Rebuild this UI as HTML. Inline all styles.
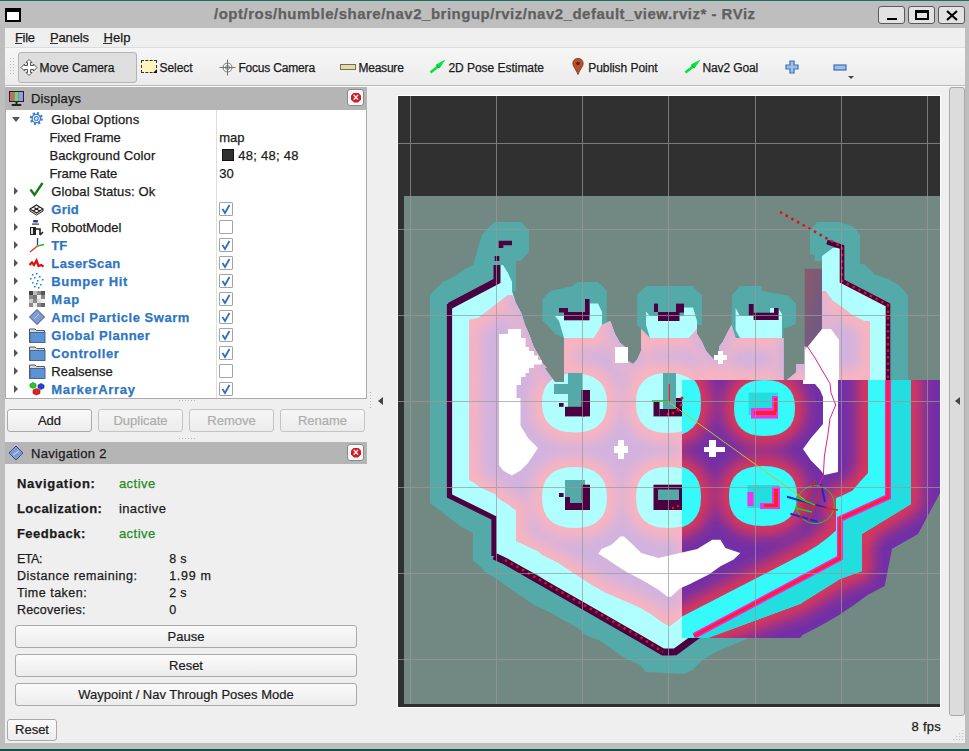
<!DOCTYPE html>
<html><head><meta charset="utf-8"><style>
*{margin:0;padding:0;box-sizing:border-box}
html,body{width:969px;height:751px;overflow:hidden;background:#bebebe;font-family:"Liberation Sans",sans-serif}
.a{position:absolute}
.t{position:absolute;white-space:nowrap;-webkit-text-stroke:0.25px currentColor}
.btn{position:absolute;border:1px solid #a9a9a9;border-radius:3px;background:linear-gradient(#fbfbfb,#ececec);color:#1b1b1b;font-size:13px;text-align:center;white-space:nowrap;-webkit-text-stroke:0.2px currentColor}
.btnd{color:#acacac;border-color:#c4c4c4;background:linear-gradient(#f6f6f6,#ececec)}
.cb{position:absolute;width:14px;height:14px;border:1px solid #a4a4a4;background:#fff;border-radius:1px}
.hdr{position:absolute;background:#b5b5b5}
.xb{position:absolute;width:17px;height:17px;border:1px solid #8a8a8a;border-radius:3px;background:#f8f8f8}
.xb:after{content:"\00d7";position:absolute;left:3px;top:2.5px;width:10px;height:10px;background:#d11a22;clip-path:polygon(30% 0,70% 0,100% 30%,100% 70%,70% 100%,30% 100%,0 70%,0 30%);color:#fff;font:bold 10px/10px "Liberation Sans";text-align:center}
.tb{position:absolute;border:1px solid #5a5a5a;border-radius:3px;background:#e2e2e2}
</style></head><body>
<!-- window frame -->
<div class="a" style="left:0;top:0;width:969px;height:1px;background:#1c7060"></div>
<div class="a" style="left:0;top:749px;width:969px;height:2px;background:#0f5248"></div>
<!-- window icon -->
<div class="a" style="left:5px;top:8px;width:16px;height:14px;background:#fff;border:2px solid #000;border-top-width:4px"></div>
<!-- title buttons -->
<div class="tb" style="left:878px;top:6px;width:27px;height:18px"><div class="a" style="left:8px;top:11px;width:10px;height:2px;background:#000"></div></div>
<div class="tb" style="left:908px;top:6px;width:27px;height:18px"><div class="a" style="left:6px;top:3px;width:14px;height:10px;border:2px solid #000;border-top-width:3px"></div></div>
<div class="tb" style="left:938px;top:6px;width:27px;height:18px"><svg class="a" style="left:7px;top:3px" width="12" height="11"><path d="M1 1L11 10M11 1L1 10" stroke="#000" stroke-width="2.2"/></svg></div>
<!-- content -->
<div class="a" style="left:5px;top:28px;width:960px;height:715px;background:#efefef"></div>
<div class="a" style="left:5px;top:47px;width:960px;height:1px;background:#dcdcdc"></div>
<div class="a" style="left:5px;top:48px;width:960px;height:37px;background:linear-gradient(#f6f6f6,#ececec)"></div>
<div class="a" style="left:5px;top:85px;width:960px;height:1px;background:#b9b9b9"></div>
<div class="a" style="left:5px;top:86px;width:960px;height:1px;background:#fafafa"></div>
<!-- menu underlines -->
<div class="a" style="left:15px;top:43px;width:7px;height:1px;background:#333"></div>
<div class="a" style="left:50px;top:43px;width:8px;height:1px;background:#333"></div>
<div class="a" style="left:103px;top:43px;width:9px;height:1px;background:#333"></div>
<!-- toolbar grip -->
<svg class="a" style="left:10px;top:58px" width="6" height="18"><g fill="#b8b8b8"><rect x="0" y="0" width="1" height="1"/><rect x="3" y="0" width="1" height="1"/><rect x="0" y="3" width="1" height="1"/><rect x="3" y="3" width="1" height="1"/><rect x="0" y="6" width="1" height="1"/><rect x="3" y="6" width="1" height="1"/><rect x="0" y="9" width="1" height="1"/><rect x="3" y="9" width="1" height="1"/><rect x="0" y="12" width="1" height="1"/><rect x="3" y="12" width="1" height="1"/><rect x="0" y="15" width="1" height="1"/><rect x="3" y="15" width="1" height="1"/></g></svg>
<!-- move camera button -->
<div class="a" style="left:18px;top:52px;width:119px;height:31px;border:1px solid #b4b4b4;border-radius:3px;background:#dedede"></div>
<!-- toolbar icons -->
<svg class="a" style="left:20px;top:59px" width="18" height="17" viewBox="0 0 18 17"><g fill="#fff" stroke="#555" stroke-width="1"><path d="M9 0.5L12 3.5H10.5V6.5H13.5V5L17 8.5L13.5 12V10.5H10.5V13.5H12L9 16.5L6 13.5H7.5V10.5H4.5V12L1 8.5L4.5 5V6.5H7.5V3.5H6Z"/></g></svg>
<div class="a" style="left:141px;top:60px;width:16px;height:13px;background:#fbf6bc;border:1px dashed #333"></div>
<div class="a" style="left:153px;top:69px;width:0;height:0;border-left:4px solid transparent;border-bottom:4px solid #111"></div>
<svg class="a" style="left:219px;top:59px" width="17" height="17" viewBox="0 0 17 17"><g fill="none" stroke="#777" stroke-width="1"><circle cx="8.5" cy="8.5" r="4.5" fill="#f4f4f4"/><path d="M8.5 0.5V16.5M0.5 8.5H16.5"/><circle cx="8.5" cy="8.5" r="2"/></g></svg>
<div class="a" style="left:340px;top:64px;width:16px;height:6px;background:#e8dc9a;border:1px solid #6d6d6d"></div>
<svg class="a" style="left:429px;top:59px" width="17" height="15" viewBox="0 0 17 15"><path d="M1.5 13.5L9 7.5" stroke="#00e63a" stroke-width="2.6"/><path d="M16.5 0.5L7 5.5L10.5 9.5Z" fill="#00e63a"/><path d="M7.5 6L10 8.8" stroke="#0a8a2a" stroke-width="1"/></svg>
<svg class="a" style="left:572px;top:58px" width="12" height="17" viewBox="0 0 12 17"><path d="M6 16.5C4 11 0.8 8.5 0.8 5.5A5.2 5.2 0 0 1 11.2 5.5C11.2 8.5 8 11 6 16.5Z" fill="#b8502a" stroke="#7a3418" stroke-width="0.8"/><circle cx="6" cy="5.5" r="1.8" fill="#5a2410"/></svg>
<svg class="a" style="left:684px;top:59px" width="17" height="15" viewBox="0 0 17 15"><path d="M1.5 13.5L9 7.5" stroke="#00e63a" stroke-width="2.6"/><path d="M16.5 0.5L7 5.5L10.5 9.5Z" fill="#00e63a"/><path d="M7.5 6L10 8.8" stroke="#0a8a2a" stroke-width="1"/></svg>
<svg class="a" style="left:785px;top:60px" width="14" height="14" viewBox="0 0 14 14"><path d="M5 1H9V5H13V9H9V13H5V9H1V5H5Z" fill="#9cc0ea" stroke="#3d6fb6" stroke-width="1.2"/></svg>
<svg class="a" style="left:833px;top:64px" width="14" height="7" viewBox="0 0 14 7"><rect x="1" y="1" width="12" height="5" fill="#9cc0ea" stroke="#3d6fb6" stroke-width="1.2"/></svg>
<div class="a" style="left:848px;top:76px;width:0;height:0;border-left:3px solid transparent;border-right:3px solid transparent;border-top:3px solid #444"></div>

<!-- Displays panel -->
<div class="hdr" style="left:5px;top:87px;width:362px;height:23px"></div>
<svg class="a" style="left:8px;top:90px" width="17" height="17" viewBox="0 0 17 17"><rect x="1" y="1" width="15" height="11" fill="#222"/><rect x="2" y="2" width="4.3" height="9" fill="#c86a6a"/><rect x="6.3" y="2" width="4.4" height="9" fill="#7ccf7c"/><rect x="10.7" y="2" width="4.3" height="9" fill="#9a9ae6"/><rect x="7.5" y="12" width="2" height="2" fill="#222"/><rect x="3.5" y="14" width="10" height="2" rx="1" fill="#222"/></svg>
<div class="xb" style="left:347px;top:89px"></div>
<div class="a" style="left:5px;top:110px;width:362px;height:289px;background:#fff;border:1px solid #ababab;border-top:none"></div>
<div class="a" style="left:216px;top:110px;width:1px;height:288px;background:#dedede"></div>
<!-- tree arrows -->
<div class="a" style="left:12px;top:117px;width:0;height:0;border-left:4px solid transparent;border-right:4px solid transparent;border-top:5px solid #555"></div>
<div class="a" style="left:14px;top:187px;width:0;height:0;border-top:4px solid transparent;border-bottom:4px solid transparent;border-left:4.5px solid #555"></div><div class="a" style="left:14px;top:205px;width:0;height:0;border-top:4px solid transparent;border-bottom:4px solid transparent;border-left:4.5px solid #555"></div><div class="a" style="left:14px;top:223px;width:0;height:0;border-top:4px solid transparent;border-bottom:4px solid transparent;border-left:4.5px solid #555"></div><div class="a" style="left:14px;top:241px;width:0;height:0;border-top:4px solid transparent;border-bottom:4px solid transparent;border-left:4.5px solid #555"></div><div class="a" style="left:14px;top:259px;width:0;height:0;border-top:4px solid transparent;border-bottom:4px solid transparent;border-left:4.5px solid #555"></div><div class="a" style="left:14px;top:277px;width:0;height:0;border-top:4px solid transparent;border-bottom:4px solid transparent;border-left:4.5px solid #555"></div><div class="a" style="left:14px;top:295px;width:0;height:0;border-top:4px solid transparent;border-bottom:4px solid transparent;border-left:4.5px solid #555"></div><div class="a" style="left:14px;top:313px;width:0;height:0;border-top:4px solid transparent;border-bottom:4px solid transparent;border-left:4.5px solid #555"></div><div class="a" style="left:14px;top:331px;width:0;height:0;border-top:4px solid transparent;border-bottom:4px solid transparent;border-left:4.5px solid #555"></div><div class="a" style="left:14px;top:349px;width:0;height:0;border-top:4px solid transparent;border-bottom:4px solid transparent;border-left:4.5px solid #555"></div><div class="a" style="left:14px;top:367px;width:0;height:0;border-top:4px solid transparent;border-bottom:4px solid transparent;border-left:4.5px solid #555"></div><div class="a" style="left:14px;top:385px;width:0;height:0;border-top:4px solid transparent;border-bottom:4px solid transparent;border-left:4.5px solid #555"></div>
<!-- checkboxes -->
<div class="cb" style="left:219px;top:202px"></div>
<div class="cb" style="left:219px;top:220px"></div>
<div class="cb" style="left:219px;top:238px"></div>
<div class="cb" style="left:219px;top:256px"></div>
<div class="cb" style="left:219px;top:274px"></div>
<div class="cb" style="left:219px;top:292px"></div>
<div class="cb" style="left:219px;top:310px"></div>
<div class="cb" style="left:219px;top:328px"></div>
<div class="cb" style="left:219px;top:346px"></div>
<div class="cb" style="left:219px;top:364px"></div>
<div class="cb" style="left:219px;top:382px"></div>
<svg class="a" style="left:219px;top:202px" width="14" height="200" viewBox="0 0 14 200"><g fill="none" stroke="#2f6fc0" stroke-width="1.8"><path id="ck" d="M3.5 7L6 11L10.5 3"/><use href="#ck" y="36"/><use href="#ck" y="54"/><use href="#ck" y="72"/><use href="#ck" y="90"/><use href="#ck" y="108"/><use href="#ck" y="126"/><use href="#ck" y="144"/><use href="#ck" y="180"/></g></svg>
<!-- color swatch -->
<div class="a" style="left:222px;top:149px;width:12px;height:12px;background:#303030;border:1px solid #111"></div>
<!-- tree icons -->
<svg class="a" style="left:29px;top:110px" width="20" height="290" viewBox="0 0 20 290">
 <g transform="translate(7.3,8.5)"><circle r="5.2" fill="none" stroke="#3c7fd0" stroke-width="2.6" stroke-dasharray="2 2.08"/><circle r="4.2" fill="none" stroke="#3c7fd0" stroke-width="1.3"/><circle r="1.9" fill="none" stroke="#3c7fd0" stroke-width="1.2"/></g>
 <path d="M1.5 79.5L5.5 85L13.5 73" fill="none" stroke="#1a7a1a" stroke-width="2.4"/>
 <g transform="translate(0,93)"><path d="M1 6L7.5 2L14 6L7.5 10Z M4.2 4L10.8 8M10.8 4L4.2 8" fill="none" stroke="#222" stroke-width="1.1"/><path d="M1 6.5V8L7.5 12L14 8V6.5" fill="none" stroke="#222" stroke-width="1"/></g>
 <g transform="translate(0,110)"><rect x="4" y="0" width="5" height="2.5" rx="1" fill="#2a3a9a"/><rect x="3" y="3.5" width="7" height="1.2" fill="#333"/><rect x="1" y="7" width="6" height="8" fill="#222"/><rect x="2" y="8" width="2" height="6" fill="#ddd"/><path d="M7 9H11V15M11 15L14 12" fill="none" stroke="#222" stroke-width="1.6"/></g>
 <g transform="translate(0,127)"><path d="M8.5 9V1" stroke="#2233dd" stroke-width="1.3"/><path d="M8.5 9L15 7.5" stroke="#22bb22" stroke-width="1.3"/><path d="M8.5 9L1 15" stroke="#ee2222" stroke-width="1.3"/><circle cx="8.5" cy="9" r="1" fill="#dd8800"/></g>
 <g transform="translate(0,148)"><path d="M0.5 7L3 4.5L5 7L7.5 2.5L9.5 8L12 7L14.5 8.5" fill="none" stroke="#e01010" stroke-width="2.3"/></g>
 <g transform="translate(0,163)" fill="#1a7ae0"><rect x="3" y="1" width="1.5" height="1.5"/><rect x="7" y="0" width="1.5" height="1.5"/><rect x="10" y="3" width="1.5" height="1.5"/><rect x="1" y="5" width="1.5" height="1.5"/><rect x="5" y="4" width="1.5" height="1.5"/><rect x="8" y="7" width="1.5" height="1.5"/><rect x="13" y="6" width="1.5" height="1.5"/><rect x="3" y="9" width="1.5" height="1.5"/><rect x="7" y="10" width="1.5" height="1.5"/><rect x="11" y="11" width="1.5" height="1.5"/><rect x="5" y="13" width="1.5" height="1.5"/><rect x="9" y="14" width="1.5" height="1.5"/></g>
 <g transform="translate(0,181)"><rect x="0" y="0" width="16" height="16" fill="#8a8a8a"/><rect x="0" y="0" width="4" height="4" fill="#444"/><rect x="4" y="0" width="4" height="4" fill="#bbb"/><rect x="12" y="0" width="4" height="4" fill="#555"/><rect x="4" y="4" width="4" height="4" fill="#777"/><rect x="8" y="4" width="4" height="4" fill="#eee"/><rect x="0" y="8" width="4" height="4" fill="#ccc"/><rect x="8" y="8" width="4" height="4" fill="#ddd"/><rect x="12" y="8" width="4" height="4" fill="#f4f4f4"/><rect x="4" y="12" width="4" height="4" fill="#eee"/><rect x="12" y="12" width="4" height="4" fill="#666"/></g>
 <g transform="translate(0,199)"><path d="M8 0.5L15.5 8L8 15.5L0.5 8Z" fill="#7f9ad0" stroke="#3a4f88" stroke-width="1"/><path d="M5 10L10 5" stroke="#c8d8f8" stroke-width="0.8"/></g>
 <g id="fold" transform="translate(0,218)"><path d="M0.5 1H6L7.5 2.5H15.5V14.5H0.5Z" fill="#d8d8d8" stroke="#555" stroke-width="1"/><rect x="1" y="4.5" width="15" height="10" fill="#5d93d2" stroke="#44679a" stroke-width="1"/></g>
 <use href="#fold" y="18"/><use href="#fold" y="36"/>
 <g transform="translate(0,271)"><path d="M1 3L4 1.5L7 3V6L4 7.5L1 6Z" fill="#22cc22" stroke="#118811" stroke-width="0.6"/><path d="M9 4L12 2.5L15 4V7L12 8.5L9 7Z" fill="#2244dd" stroke="#112288" stroke-width="0.6"/><path d="M4 9L7.5 7.5L11 9V12.5L7.5 14L4 12.5Z" fill="#dd2222" stroke="#881111" stroke-width="0.6"/></g>
</svg>
<!-- splitter grip -->
<svg class="a" style="left:179px;top:399px" width="18" height="42"><g fill="#b8b8b8"><rect x="0" y="1" width="1" height="1"/><rect x="3" y="1" width="1" height="1"/><rect x="6" y="1" width="1" height="1"/><rect x="9" y="1" width="1" height="1"/><rect x="12" y="1" width="1" height="1"/><rect x="15" y="1" width="1" height="1"/><rect x="0" y="39" width="1" height="1"/><rect x="3" y="39" width="1" height="1"/><rect x="6" y="39" width="1" height="1"/><rect x="9" y="39" width="1" height="1"/><rect x="12" y="39" width="1" height="1"/><rect x="15" y="39" width="1" height="1"/></g></svg>
<!-- buttons -->
<div class="btn" style="left:7px;top:409px;width:85px;height:23px;line-height:21px">Add</div>
<div class="btn btnd" style="left:98px;top:409px;width:85px;height:23px;line-height:21px">Duplicate</div>
<div class="btn btnd" style="left:189px;top:409px;width:85px;height:23px;line-height:21px">Remove</div>
<div class="btn btnd" style="left:280px;top:409px;width:85px;height:23px;line-height:21px">Rename</div>
<!-- Navigation 2 -->
<div class="hdr" style="left:5px;top:442px;width:362px;height:22px"></div>
<svg class="a" style="left:8px;top:445px" width="16" height="16" viewBox="0 0 16 16"><path d="M8 1L15 8L8 15L1 8Z" fill="#7f9ad0" stroke="#3a4f88" stroke-width="1"/><path d="M5 10L11 6" stroke="#cfe0ff" stroke-width="1"/></svg>
<div class="xb" style="left:347px;top:444px"></div>
<div class="btn" style="left:15px;top:625px;width:342px;height:23px;line-height:21px">Pause</div>
<div class="btn" style="left:15px;top:654px;width:342px;height:23px;line-height:21px">Reset</div>
<div class="btn" style="left:15px;top:683px;width:342px;height:23px;line-height:21px">Waypoint / Nav Through Poses Mode</div>
<div class="btn" style="left:7px;top:719px;width:50px;height:22px;line-height:20px">Reset</div>
<!-- left/right splitters -->
<svg class="a" style="left:370px;top:392px" width="3" height="18"><g fill="#b8b8b8"><rect x="0" y="0" width="1" height="1"/><rect x="0" y="3" width="1" height="1"/><rect x="0" y="6" width="1" height="1"/><rect x="0" y="9" width="1" height="1"/><rect x="0" y="12" width="1" height="1"/><rect x="0" y="15" width="1" height="1"/></g></svg>
<div class="a" style="left:378px;top:397px;width:0;height:0;border-top:4.5px solid transparent;border-bottom:4.5px solid transparent;border-right:5px solid #444"></div>
<div class="a" style="left:949px;top:87px;width:16px;height:629px;border:1px solid #a8a8a8;border-radius:3px;background:#dcdcdc"></div>
<div class="a" style="left:955px;top:397px;width:0;height:0;border-top:4.5px solid transparent;border-bottom:4.5px solid transparent;border-right:5px solid #444"></div>
<svg class="a" style="left:953px;top:729px" width="12" height="12"><g fill="#c4c4c4"><rect x="9" y="1" width="1.2" height="1.2"/><rect x="6" y="4" width="1.2" height="1.2"/><rect x="9" y="4" width="1.2" height="1.2"/><rect x="3" y="7" width="1.2" height="1.2"/><rect x="6" y="7" width="1.2" height="1.2"/><rect x="9" y="7" width="1.2" height="1.2"/><rect x="0" y="10" width="1.2" height="1.2"/><rect x="3" y="10" width="1.2" height="1.2"/><rect x="6" y="10" width="1.2" height="1.2"/><rect x="9" y="10" width="1.2" height="1.2"/></g></svg>
<!-- viewport -->
<div class="a" style="left:397px;top:95px;width:544px;height:613px;background:#fff"></div>
<svg class="a" style="left:398px;top:96px" width="542" height="611" viewBox="398 96 542 611">
<defs>
<clipPath id="vp"><rect x="398" y="96" width="542" height="611"/></clipPath>
<clipPath id="loc"><polygon points="682,380 940,380 940,493 918,534 892,549 884.7,586 867.5,595 852.5,606 837.5,616 820,626 802.5,635 800,638 682,638"/></clipPath>
<clipPath id="pkc"><polygon points="469,320 469.3,480 473.3,482 478.6,486 486,490 495.3,494 499.3,499 508,504 512.6,508 516,510 516,541 520.6,543 529,547 538,551 542.5,555 558,562.5 573,572.5 590.5,584 605.5,592.5 623,600 640,607.5 652.5,615 662.5,622.5 670,626 681,617.5 690,612 690,380 870,380 870,321 864,321 852,315 844.7,309 832.7,300.7 825.5,291 818,291 818,346 804.6,346 804.6,364 796,364 796,372.5 787,380 783.5,380 783.5,338 782,338 735.6,338 731.5,325 726.7,334 722.7,342 719,346.7 719,359.5 714,359.5 710,355.5 706,351 702,342 697,334 697,329 689,338 650,338 641,329 641,351 637,360 633,364 628,361 624.7,346.7 620,342.7 615,334 610.3,321 602,325 594,338 564,338 564,382 555,382 551,374 546.3,367.5 542.4,362.7 538.4,354.7 533.6,346.7 529,334 525,325 521,312.4 516,303.6 512,295 508,295 478.5,318"/></clipPath>
<filter id="bl" x="-20%" y="-20%" width="140%" height="140%"><feGaussianBlur stdDeviation="6"/></filter>
<filter id="bl2" x="-20%" y="-20%" width="140%" height="140%"><feGaussianBlur stdDeviation="8"/></filter>
<linearGradient id="strip" x1="0" y1="0" x2="1" y2="1"><stop offset="0" stop-color="#8a5a6a"/><stop offset="1" stop-color="#6a5a8a"/></linearGradient>
</defs><g clip-path="url(#vp)">
<rect x="398" y="96" width="542" height="611" fill="#303030"/>
<rect x="404" y="196" width="536" height="508" fill="#718883"/>
<polygon fill="#53aaa9" points="430,503 430,295 434,290.5 439,286 443,282 451.5,278 459.5,273 465,269 473,265 478,248 482,235 486,230 490,226 495,222 521,222 525,226 529,230 529,252 525,256 521,261 516,261 516,291 512,291 516,303.6 521,312.4 525,325 529,334 533.6,346.7 538.4,354.7 542.4,362.7 546.3,367.5 551,374 555,382 564,382 564,338 555,334 551,329 546,324 542.4,321 542.4,299.6 546.3,294.8 551,290.8 572.7,286 577.5,282 597.5,282 602.3,286 606.8,290.8 606.8,321 610.3,321 615,334 620,342.7 624.7,346.7 628,361 633,364 637,360 641,351 641,329 637.2,325 637.2,294.8 641,290.8 646,286 693,286 697,290.8 702,294.8 702,325 697,325 697,334 702,342 706,351 710,355.5 714,359.5 719,359.5 719,346.7 722.7,342 726.7,334 731.5,325 732,294.8 736,290.8 740,286 762,286 762,291 788,295.4 796,304 796,324 783.5,329 783.5,380 787,380 796,372.5 796,364 804.6,364 804.6,268.7 822,268.7 822,261 814.7,261 814.7,255 810,254 810,231 814,226 817,222 838.7,222 852,226 856.7,230 860,234.8 860,263.5 865,264.7 870,269.5 874.7,274.3 888,279 898.6,285 904.6,291 908,296 908,540 750,637.5 732.5,645 715,652.5 702.5,660 692.5,670 684,674 646,672 640,665 624,657.5 613,650 600.5,641 585.5,635 577,627.5 563,620 550.5,612.5 534,605 525.5,599 512,590 498,580 485.5,572 477.5,564 473,561 473,533 460,526"/>
<polygon fill="#b0fefe" points="449,320 449,303 497,280 497,265 503,265 508,273 512,282 512,291 540,380 818,380 818,291 822,281.5 822,256 832.7,248 840,248 841,281 888,305 888,497 840,519 840,558 705,630 675,656 657.5,647.5 640,637.5 623,627.5 608,617.5 588,607.5 568,595 548,582.5 538,575 518,565 505,560 494,556 494,518 449,496"/>
<polygon fill="#b0fefe" points="555,316 559,321 564,338 594,338 598,334 602,325 602,312 598,303.6 590,303.6 590,316"/>
<polygon fill="#b0fefe" points="646,311.5 646,325 650,338 689,338 693,334 697,329 697,321 693,307.6 684,307.6 684,316 650,316"/>
<polygon fill="#b0fefe" points="735.6,308 735.6,330 740,338 782,338 782,314 778,308 770,308 770,316 740,316"/>
<polygon fill="#d2b3df" points="469,320 469.3,480 473.3,482 478.6,486 486,490 495.3,494 499.3,499 508,504 512.6,508 516,510 516,541 520.6,543 529,547 538,551 542.5,555 558,562.5 573,572.5 590.5,584 605.5,592.5 623,600 640,607.5 652.5,615 662.5,622.5 670,626 681,617.5 690,612 690,380 870,380 870,321 864,321 852,315 844.7,309 832.7,300.7 825.5,291 818,291 818,346 804.6,346 804.6,364 796,364 796,372.5 787,380 783.5,380 783.5,338 782,338 735.6,338 731.5,325 726.7,334 722.7,342 719,346.7 719,359.5 714,359.5 710,355.5 706,351 702,342 697,334 697,329 689,338 650,338 641,329 641,351 637,360 633,364 628,361 624.7,346.7 620,342.7 615,334 610.3,321 602,325 594,338 564,338 564,382 555,382 551,374 546.3,367.5 542.4,362.7 538.4,354.7 533.6,346.7 529,334 525,325 521,312.4 516,303.6 512,295 508,295 478.5,318"/>
<g clip-path="url(#pkc)"><g filter="url(#bl)" fill="none" stroke="#f8b4c0" stroke-width="22">
<polygon points="469,320 469.3,480 473.3,482 478.6,486 486,490 495.3,494 499.3,499 508,504 512.6,508 516,510 516,541 520.6,543 529,547 538,551 542.5,555 558,562.5 573,572.5 590.5,584 605.5,592.5 623,600 640,607.5 652.5,615 662.5,622.5 670,626 681,617.5 690,612 690,380 870,380 870,321 864,321 852,315 844.7,309 832.7,300.7 825.5,291 818,291 818,346 804.6,346 804.6,364 796,364 796,372.5 787,380 783.5,380 783.5,338 782,338 735.6,338 731.5,325 726.7,334 722.7,342 719,346.7 719,359.5 714,359.5 710,355.5 706,351 702,342 697,334 697,329 689,338 650,338 641,329 641,351 637,360 633,364 628,361 624.7,346.7 620,342.7 615,334 610.3,321 602,325 594,338 564,338 564,382 555,382 551,374 546.3,367.5 542.4,362.7 538.4,354.7 533.6,346.7 529,334 525,325 521,312.4 516,303.6 512,295 508,295 478.5,318"/>
<polygon points="607.0,403.0 606.5,410.6 604.9,416.2 602.4,421.1 598.8,425.1 594.4,428.3 589.1,430.6 582.8,432.0 574.5,432.5 566.2,432.0 559.9,430.6 554.6,428.3 550.2,425.1 546.6,421.1 544.1,416.2 542.5,410.6 542.0,403.0 542.5,395.4 544.1,389.8 546.6,384.9 550.2,380.9 554.6,377.7 559.9,375.4 566.2,374.0 574.5,373.5 582.8,374.0 589.1,375.4 594.4,377.7 598.8,380.9 602.4,384.9 604.9,389.8 606.5,395.4"/>
<polygon points="700.0,403.0 699.5,410.7 698.0,416.5 695.4,421.4 692.0,425.5 687.6,428.7 682.4,431.1 676.2,432.5 668.0,433.0 659.8,432.5 653.6,431.1 648.4,428.7 644.0,425.5 640.6,421.4 638.0,416.5 636.5,410.7 636.0,403.0 636.5,395.3 638.0,389.5 640.6,384.6 644.0,380.5 648.4,377.3 653.6,374.9 659.8,373.5 668.0,373.0 676.2,373.5 682.4,374.9 687.6,377.3 692.0,380.5 695.4,384.6 698.0,389.5 699.5,395.3"/>
<polygon points="607.0,497.5 606.5,505.3 604.9,511.2 602.4,516.2 598.8,520.3 594.4,523.7 589.1,526.1 582.8,527.5 574.5,528.0 566.2,527.5 559.9,526.1 554.6,523.7 550.2,520.3 546.6,516.2 544.1,511.2 542.5,505.3 542.0,497.5 542.5,489.7 544.1,483.8 546.6,478.8 550.2,474.7 554.6,471.3 559.9,468.9 566.2,467.5 574.5,467.0 582.8,467.5 589.1,468.9 594.4,471.3 598.8,474.7 602.4,478.8 604.9,483.8 606.5,489.7"/>
<polygon points="700.0,497.5 699.5,505.3 698.0,511.2 695.4,516.2 692.0,520.3 687.6,523.7 682.4,526.1 676.2,527.5 668.0,528.0 659.8,527.5 653.6,526.1 648.4,523.7 644.0,520.3 640.6,516.2 638.0,511.2 636.5,505.3 636.0,497.5 636.5,489.7 638.0,483.8 640.6,478.8 644.0,474.7 648.4,471.3 653.6,468.9 659.8,467.5 668.0,467.0 676.2,467.5 682.4,468.9 687.6,471.3 692.0,474.7 695.4,478.8 698.0,483.8 699.5,489.7"/>
</g>
<g filter="url(#bl)" fill="none" stroke="#d2b3df" stroke-width="14">
<polyline points="512,291 516,303.6 521,312.4 525,325 529,334 533.6,346.7 538.4,354.7 542.4,362.7 546.3,367.5 551,374 555,382 564,382"/>
<polyline points="610.3,321 615,334 620,342.7 624.7,346.7 628,361 633,364 637,360 641,351"/>
<polyline points="697,329 697,334 702,342 706,351 710,355.5 714,359.5 719,359.5 719,346.7 722.7,342 726.7,334 731.5,325"/>
<polyline points="783.5,380 783.5,338"/><polyline points="796,372.5 796,364 804.6,364 818,346 818,291"/>
</g></g>
<rect x="804.6" y="268.7" width="17.4" height="78" fill="url(#strip)"/>
<polygon fill="#fff" points="499,334 508,334 508,329 521,329 521,338 525.5,338 525.5,347 529,347 529,351 534,351 534,355.5 538,355.5 538,360 541.7,360 541.7,364.5 534,364.5 534,368 529,368 529,373 525.5,373 525.5,377 521,377 521,385 516.5,385 516.5,398 520.5,398 520.5,425.5 528,438 538,448 528,463 520.5,470.5 511.75,475.5 503,470.5 499,465"/>
<polygon fill="#fff" points="615,347 628,347 628,363 615,363"/>
<polygon fill="#fff" points="718,351 723,351 723,355 727,355 727,360 723,360 723,364 718,364 718,360 714,360 714,355 718,355"/>
<polygon fill="#fff" points="618,440 624,440 624,446 628,446 628,453 624,453 624,459 618,459 618,453 614,453 614,446 618,446"/>
<polygon fill="#fff" points="822,329 831,329 839,340 839,482 820,470 802,450 812,432 805,390 805,350"/>
<polygon fill="#fff" points="598.3,553.8 601.6,548.9 611.5,544.7 620.5,536.5 623.9,536.5 633,544.7 641.2,553 658.5,558 680,553 697.3,548.9 712.2,539.8 720.4,539.8 725.4,548 740.3,553 733.7,559.6 720.4,566.2 708.9,574.4 689,584.4 680,588.5 671,596.7 667.6,596.7 657.7,589.3 641.2,579.4 628,572.8 614.8,564.5 606.5,558.8"/>
<polygon fill="#b0fefe" points="607.0,403.0 606.5,410.6 604.9,416.2 602.4,421.1 598.8,425.1 594.4,428.3 589.1,430.6 582.8,432.0 574.5,432.5 566.2,432.0 559.9,430.6 554.6,428.3 550.2,425.1 546.6,421.1 544.1,416.2 542.5,410.6 542.0,403.0 542.5,395.4 544.1,389.8 546.6,384.9 550.2,380.9 554.6,377.7 559.9,375.4 566.2,374.0 574.5,373.5 582.8,374.0 589.1,375.4 594.4,377.7 598.8,380.9 602.4,384.9 604.9,389.8 606.5,395.4"/>
<polygon fill="#b0fefe" points="700.0,403.0 699.5,410.7 698.0,416.5 695.4,421.4 692.0,425.5 687.6,428.7 682.4,431.1 676.2,432.5 668.0,433.0 659.8,432.5 653.6,431.1 648.4,428.7 644.0,425.5 640.6,421.4 638.0,416.5 636.5,410.7 636.0,403.0 636.5,395.3 638.0,389.5 640.6,384.6 644.0,380.5 648.4,377.3 653.6,374.9 659.8,373.5 668.0,373.0 676.2,373.5 682.4,374.9 687.6,377.3 692.0,380.5 695.4,384.6 698.0,389.5 699.5,395.3"/>
<polygon fill="#b0fefe" points="607.0,497.5 606.5,505.3 604.9,511.2 602.4,516.2 598.8,520.3 594.4,523.7 589.1,526.1 582.8,527.5 574.5,528.0 566.2,527.5 559.9,526.1 554.6,523.7 550.2,520.3 546.6,516.2 544.1,511.2 542.5,505.3 542.0,497.5 542.5,489.7 544.1,483.8 546.6,478.8 550.2,474.7 554.6,471.3 559.9,468.9 566.2,467.5 574.5,467.0 582.8,467.5 589.1,468.9 594.4,471.3 598.8,474.7 602.4,478.8 604.9,483.8 606.5,489.7"/>
<polygon fill="#b0fefe" points="700.0,497.5 699.5,505.3 698.0,511.2 695.4,516.2 692.0,520.3 687.6,523.7 682.4,526.1 676.2,527.5 668.0,528.0 659.8,527.5 653.6,526.1 648.4,523.7 644.0,520.3 640.6,516.2 638.0,511.2 636.5,505.3 636.0,497.5 636.5,489.7 638.0,483.8 640.6,478.8 644.0,474.7 648.4,471.3 653.6,468.9 659.8,467.5 668.0,467.0 676.2,467.5 682.4,468.9 687.6,471.3 692.0,474.7 695.4,478.8 698.0,483.8 699.5,489.7"/>
<polygon fill="#718883" points="545,368 564,368 564,382 555,382"/>
<g fill="#53aaa9"><rect x="568" y="373" width="14" height="38"/><rect x="554" y="384" width="14" height="10"/><rect x="663" y="373" width="13" height="34"/><rect x="565" y="480" width="20" height="20"/><rect x="658" y="489" width="21" height="15"/></g>
<g fill="#4b0041">
<rect x="565" y="406.8" width="20" height="9.6"/><rect x="581.5" y="390" width="8.5" height="26.4"/><rect x="559" y="403" width="4.6" height="3.8"/>
<rect x="653.5" y="402" width="6" height="14.4"/><rect x="659.5" y="409" width="24" height="7.4"/><rect x="676" y="398" width="7.5" height="18"/>
<rect x="565" y="503" width="25" height="7"/><rect x="565" y="497" width="5" height="13"/><rect x="581.5" y="484.7" width="8.5" height="25.3"/><rect x="559" y="493" width="4.6" height="4"/>
<rect x="653.5" y="484.7" width="28.5" height="25.3"/>
<rect x="559" y="308" width="9" height="4.5"/><rect x="564" y="312" width="25.5" height="8.3"/><rect x="585" y="299" width="4.5" height="13"/>
<rect x="654" y="303.6" width="4" height="8.4"/><rect x="658" y="312" width="21.5" height="9"/><rect x="676" y="303.6" width="8" height="9"/>
<rect x="748.8" y="304" width="4.8" height="12"/><rect x="753.6" y="312.7" width="25" height="7.3"/><rect x="774" y="308" width="4.7" height="5"/>
</g>
<g fill="#53aaa9"><rect x="658" y="489.5" width="21" height="10.5"/><rect x="570" y="480" width="11.5" height="23"/><rect x="663" y="373" width="13" height="36"/></g>
<g fill="none" stroke="#4b0041" stroke-width="5.2" stroke-linejoin="miter">
<path d="M449.5,304 V496 L494,518 V556"/>
</g>
<g fill="none" stroke="#4b0041" stroke-width="7" stroke-linejoin="miter">
<path d="M494,556 L505,561 L640,638.5 L663,652 L675,652 L705,630"/>
<path d="M449.5,306 L497,281 V265"/>
</g>
<g fill="none" stroke="#4b0041" stroke-width="4.6" stroke-linejoin="miter">
<path d="M497,261 V256"/><path d="M501,248 V243 H512"/>
<path d="M827,242 L842,247 V281 L888,305 V380"/>
</g>
<g clip-path="url(#loc)">
<rect x="682" y="380" width="258" height="258" fill="#7030a8"/>
<g filter="url(#bl2)" stroke="#f03848" stroke-width="18" fill="none">
<polygon points="682,616.5 805,553 817.5,545.5 827.5,538 836,530.5 836,498 842.5,495.5 852.5,490.5 861,480.5 868,473 868,380 911,380 911,504 862,534 862,571 840,579 800,604 705,639 682,639"/>
<polygon points="701.0,403.0 700.5,411.5 698.9,417.8 696.3,423.2 692.7,427.7 688.2,431.3 682.8,433.9 676.5,435.5 668.0,436.0 659.5,435.5 653.2,433.9 647.8,431.3 643.3,427.7 639.7,423.2 637.1,417.8 635.5,411.5 635.0,403.0 635.5,394.5 637.1,388.2 639.7,382.8 643.3,378.3 647.8,374.7 653.2,372.1 659.5,370.5 668.0,370.0 676.5,370.5 682.8,372.1 688.2,374.7 692.7,378.3 696.3,382.8 698.9,388.2 700.5,394.5"/>
<polygon points="795.0,408.0 794.5,415.2 793.1,420.6 790.7,425.2 787.3,429.0 783.2,432.0 778.2,434.2 772.3,435.6 764.5,436.0 756.7,435.6 750.8,434.2 745.8,432.0 741.7,429.0 738.3,425.2 735.9,420.6 734.5,415.2 734.0,408.0 734.5,400.8 735.9,395.4 738.3,390.8 741.7,387.0 745.8,384.0 750.8,381.8 756.7,380.4 764.5,380.0 772.3,380.4 778.2,381.8 783.2,384.0 787.3,387.0 790.7,390.8 793.1,395.4 794.5,400.8"/>
<polygon points="701.0,497.0 700.5,505.2 698.9,511.4 696.3,516.6 692.7,521.0 688.2,524.4 682.8,527.0 676.5,528.5 668.0,529.0 659.5,528.5 653.2,527.0 647.8,524.4 643.3,521.0 639.7,516.6 637.1,511.4 635.5,505.2 635.0,497.0 635.5,488.8 637.1,482.6 639.7,477.4 643.3,473.0 647.8,469.6 653.2,467.0 659.5,465.5 668.0,465.0 676.5,465.5 682.8,467.0 688.2,469.6 692.7,473.0 696.3,477.4 698.9,482.6 700.5,488.8"/>
<polygon points="797.0,496.0 796.5,503.7 794.8,509.5 792.2,514.4 788.5,518.5 783.8,521.7 778.3,524.1 771.7,525.5 763.0,526.0 754.3,525.5 747.7,524.1 742.2,521.7 737.5,518.5 733.8,514.4 731.2,509.5 729.5,503.7 729.0,496.0 729.5,488.3 731.2,482.5 733.8,477.6 737.5,473.5 742.2,470.3 747.7,467.9 754.3,466.5 763.0,466.0 771.7,466.5 778.3,467.9 783.8,470.3 788.5,473.5 792.2,477.6 794.8,482.5 796.5,488.3"/>
</g>
<polygon fill="#fff" points="803,380 838,380 838,472 824.4,475 820,469.5 811,460.5 803,449 811,438 818,430 823,424 823,397 820,390 815,384 803,384"/>
<polygon fill="#fff" points="709,440 716,440 716,447 725,447 725,452 716,452 716,457 709,457 709,452 704,452 704,447 709,447"/>
<polygon fill="#fff" points="598.3,553.8 601.6,548.9 611.5,544.7 620.5,536.5 623.9,536.5 633,544.7 641.2,553 658.5,558 680,553 697.3,548.9 712.2,539.8 720.4,539.8 725.4,548 740.3,553 733.7,559.6 720.4,566.2 708.9,574.4 689,584.4 680,588.5 671,596.7 667.6,596.7 657.7,589.3 641.2,579.4 628,572.8 614.8,564.5 606.5,558.8"/>
<g fill="#36fafa">
<polygon points="682,616.5 805,553 817.5,545.5 827.5,538 836,530.5 836,498 842.5,495.5 852.5,490.5 861,480.5 868,473 868,380 911,380 911,504 862,534 862,571 840,579 800,604 705,639 682,639"/>
<polygon points="701.0,403.0 700.5,411.5 698.9,417.8 696.3,423.2 692.7,427.7 688.2,431.3 682.8,433.9 676.5,435.5 668.0,436.0 659.5,435.5 653.2,433.9 647.8,431.3 643.3,427.7 639.7,423.2 637.1,417.8 635.5,411.5 635.0,403.0 635.5,394.5 637.1,388.2 639.7,382.8 643.3,378.3 647.8,374.7 653.2,372.1 659.5,370.5 668.0,370.0 676.5,370.5 682.8,372.1 688.2,374.7 692.7,378.3 696.3,382.8 698.9,388.2 700.5,394.5"/>
<polygon points="795.0,408.0 794.5,415.2 793.1,420.6 790.7,425.2 787.3,429.0 783.2,432.0 778.2,434.2 772.3,435.6 764.5,436.0 756.7,435.6 750.8,434.2 745.8,432.0 741.7,429.0 738.3,425.2 735.9,420.6 734.5,415.2 734.0,408.0 734.5,400.8 735.9,395.4 738.3,390.8 741.7,387.0 745.8,384.0 750.8,381.8 756.7,380.4 764.5,380.0 772.3,380.4 778.2,381.8 783.2,384.0 787.3,387.0 790.7,390.8 793.1,395.4 794.5,400.8"/>
<polygon points="701.0,497.0 700.5,505.2 698.9,511.4 696.3,516.6 692.7,521.0 688.2,524.4 682.8,527.0 676.5,528.5 668.0,529.0 659.5,528.5 653.2,527.0 647.8,524.4 643.3,521.0 639.7,516.6 637.1,511.4 635.5,505.2 635.0,497.0 635.5,488.8 637.1,482.6 639.7,477.4 643.3,473.0 647.8,469.6 653.2,467.0 659.5,465.5 668.0,465.0 676.5,465.5 682.8,467.0 688.2,469.6 692.7,473.0 696.3,477.4 698.9,482.6 700.5,488.8"/>
<polygon points="797.0,496.0 796.5,503.7 794.8,509.5 792.2,514.4 788.5,518.5 783.8,521.7 778.3,524.1 771.7,525.5 763.0,526.0 754.3,525.5 747.7,524.1 742.2,521.7 737.5,518.5 733.8,514.4 731.2,509.5 729.5,503.7 729.0,496.0 729.5,488.3 731.2,482.5 733.8,477.6 737.5,473.5 742.2,470.3 747.7,467.9 754.3,466.5 763.0,466.0 771.7,466.5 778.3,467.9 783.8,470.3 788.5,473.5 792.2,477.6 794.8,482.5 796.5,488.3"/>
</g>
<polygon fill="#22dede" points="890,380 911,380 911,504 862,534 862,571 840,579 800,604 705,639 694,638 840,560 840,519 890,497"/>
<g fill="none" stroke="#ee22ee" stroke-width="6"><path d="M888,380 V497 L840,519 V558 L694,636"/></g>
<g fill="none" stroke="#ff2020" stroke-width="3"><path d="M888,380 V497 L840,519 V558 L694,636"/></g>
<g fill="#22dede"><rect x="748.6" y="392.6" width="29.4" height="22.4"/><rect x="747.5" y="485" width="31.5" height="23"/></g>
<g fill="#ee33ee"><rect x="751" y="408" width="27" height="10.6"/><rect x="772" y="396" width="6" height="20"/><rect x="772" y="486.5" width="8" height="22.5"/><rect x="747.5" y="492" width="6" height="14"/><rect x="760" y="503" width="18" height="6"/></g>
<g fill="#ff2020"><rect x="754" y="411" width="22" height="4"/><rect x="774" y="398" width="3" height="14"/><rect x="774" y="489" width="4" height="18"/><rect x="764" y="504" width="12" height="3"/></g>
</g>
<polyline fill="none" stroke="#e0208a" stroke-width="1" points="807,346 815,358 822,370 830,383.6 831,392.6 835.7,405 830,418.6 827.8,435.6 824.4,456 823.3,476 817.6,487.6"/>
<line x1="670" y1="403" x2="805" y2="500" stroke="#c8c020" stroke-width="1"/><line x1="669" y1="402" x2="669" y2="384" stroke="#ee1111" stroke-width="1.6"/><line x1="669" y1="401" x2="652" y2="401" stroke="#11cc11" stroke-width="1.6"/><g fill="#ee1111"><circle cx="668" cy="414" r="1.5"/><circle cx="673" cy="413" r="1.5"/><circle cx="678" cy="410" r="1.5"/><circle cx="681" cy="405" r="1.5"/><circle cx="682" cy="398" r="1.5"/><circle cx="673" cy="508" r="1.2"/><circle cx="678" cy="506" r="1.2"/></g>
<circle cx="815.4" cy="504.6" r="19" fill="none" stroke="#22cc22" stroke-width="1"/>
<g stroke="#1a2ad0" stroke-width="2"><line x1="787" y1="496.7" x2="826.7" y2="508"/><line x1="790.5" y1="513.7" x2="817.6" y2="521.6"/><line x1="821" y1="484" x2="825" y2="502"/></g>
<g stroke="#e02020" stroke-width="1.5"><line x1="800" y1="520" x2="815" y2="480"/><line x1="808" y1="522" x2="822" y2="485"/><line x1="800" y1="505" x2="838" y2="510"/></g>
<g stroke="#22cc22" stroke-width="1.5"><line x1="796" y1="497" x2="815" y2="505"/><line x1="795" y1="508" x2="812" y2="512"/></g>
<g stroke="#e01010" stroke-width="2.5" stroke-dasharray="2.5 4" fill="none"><path d="M780,212 L842,247 V281 L888,305 V380"/><path d="M505,560 L640,637 L663,652"/></g>
<g stroke="#9a9a9a" stroke-width="1" opacity="0.7"><path d="M410.5,96V704 M496.5,96V704 M582.5,96V704 M668.5,96V704 M755.5,96V704 M841.5,96V704 M927.5,96V704"/><path d="M398,143.5H940 M398,229.5H940 M398,315.5H940 M398,401.5H940 M398,487.5H940 M398,573.5H940 M398,659.5H940"/></g>
<rect x="398" y="704" width="542" height="3" fill="#303030"/>
</g></svg>
<div class="t" style="left:214.0px;top:6.1px;font-size:15px;line-height:15px;font-weight:bold;color:#606060;letter-spacing:0.50px">/opt/ros/humble/share/nav2_bringup/rviz/nav2_default_view.rviz* - RViz</div>
<div class="t" style="left:15.0px;top:31.0px;font-size:13px;line-height:13px;font-weight:normal;color:#1b1b1b;letter-spacing:-0.32px">File</div>
<div class="t" style="left:50.0px;top:31.0px;font-size:13px;line-height:13px;font-weight:normal;color:#1b1b1b;letter-spacing:-0.15px">Panels</div>
<div class="t" style="left:103.5px;top:31.0px;font-size:13px;line-height:13px;font-weight:normal;color:#1b1b1b;letter-spacing:0.09px">Help</div>
<div class="t" style="left:39.5px;top:61.8px;font-size:12px;line-height:12px;font-weight:normal;color:#1b1b1b;letter-spacing:-0.04px">Move Camera</div>
<div class="t" style="left:159.5px;top:61.8px;font-size:12px;line-height:12px;font-weight:normal;color:#1b1b1b;letter-spacing:-0.07px">Select</div>
<div class="t" style="left:238.4px;top:61.8px;font-size:12px;line-height:12px;font-weight:normal;color:#1b1b1b;letter-spacing:-0.18px">Focus Camera</div>
<div class="t" style="left:358.4px;top:61.8px;font-size:12px;line-height:12px;font-weight:normal;color:#1b1b1b;letter-spacing:-0.21px">Measure</div>
<div class="t" style="left:448.4px;top:61.8px;font-size:12px;line-height:12px;font-weight:normal;color:#1b1b1b;letter-spacing:-0.03px">2D Pose Estimate</div>
<div class="t" style="left:588.2px;top:61.8px;font-size:12px;line-height:12px;font-weight:normal;color:#1b1b1b;letter-spacing:-0.05px">Publish Point</div>
<div class="t" style="left:702.4px;top:61.8px;font-size:12px;line-height:12px;font-weight:normal;color:#1b1b1b;letter-spacing:-0.10px">Nav2 Goal</div>
<div class="t" style="left:31.0px;top:92.0px;font-size:13px;line-height:13px;font-weight:normal;color:#1b1b1b;letter-spacing:0.13px">Displays</div>
<div class="t" style="left:51.3px;top:113.1px;font-size:13px;line-height:13px;font-weight:normal;color:#1b1b1b;letter-spacing:0.15px">Global Options</div>
<div class="t" style="left:49.5px;top:131.1px;font-size:13px;line-height:13px;font-weight:normal;color:#1b1b1b;letter-spacing:-0.17px">Fixed Frame</div>
<div class="t" style="left:49.5px;top:149.1px;font-size:13px;line-height:13px;font-weight:normal;color:#1b1b1b;letter-spacing:0.11px">Background Color</div>
<div class="t" style="left:49.5px;top:167.1px;font-size:13px;line-height:13px;font-weight:normal;color:#1b1b1b;letter-spacing:-0.11px">Frame Rate</div>
<div class="t" style="left:51.3px;top:185.1px;font-size:13px;line-height:13px;font-weight:normal;color:#1b1b1b;letter-spacing:0.13px">Global Status: Ok</div>
<div class="t" style="left:51.3px;top:203.1px;font-size:13px;line-height:13px;font-weight:bold;color:#2f76c0;letter-spacing:0.26px">Grid</div>
<div class="t" style="left:51.3px;top:221.1px;font-size:13px;line-height:13px;font-weight:normal;color:#1b1b1b;letter-spacing:0.00px">RobotModel</div>
<div class="t" style="left:51.3px;top:239.1px;font-size:13px;line-height:13px;font-weight:bold;color:#2f76c0;letter-spacing:0.00px">TF</div>
<div class="t" style="left:51.3px;top:257.1px;font-size:13px;line-height:13px;font-weight:bold;color:#2f76c0;letter-spacing:0.40px">LaserScan</div>
<div class="t" style="left:51.3px;top:275.1px;font-size:13px;line-height:13px;font-weight:bold;color:#2f76c0;letter-spacing:0.66px">Bumper Hit</div>
<div class="t" style="left:51.3px;top:293.1px;font-size:13px;line-height:13px;font-weight:bold;color:#2f76c0;letter-spacing:1.00px">Map</div>
<div class="t" style="left:51.3px;top:311.1px;font-size:13px;line-height:13px;font-weight:bold;color:#2f76c0;letter-spacing:0.52px">Amcl Particle Swarm</div>
<div class="t" style="left:51.3px;top:329.1px;font-size:13px;line-height:13px;font-weight:bold;color:#2f76c0;letter-spacing:0.53px">Global Planner</div>
<div class="t" style="left:51.3px;top:347.1px;font-size:13px;line-height:13px;font-weight:bold;color:#2f76c0;letter-spacing:0.61px">Controller</div>
<div class="t" style="left:51.3px;top:365.1px;font-size:13px;line-height:13px;font-weight:normal;color:#1b1b1b;letter-spacing:0.00px">Realsense</div>
<div class="t" style="left:51.3px;top:383.1px;font-size:13px;line-height:13px;font-weight:bold;color:#2f76c0;letter-spacing:0.71px">MarkerArray</div>
<div class="t" style="left:219.2px;top:131.0px;font-size:13px;line-height:13px;font-weight:normal;color:#1b1b1b;letter-spacing:0.00px">map</div>
<div class="t" style="left:238.3px;top:149.0px;font-size:13px;line-height:13px;font-weight:normal;color:#1b1b1b;letter-spacing:0.27px">48; 48; 48</div>
<div class="t" style="left:219.2px;top:167.0px;font-size:13px;line-height:13px;font-weight:normal;color:#1b1b1b;letter-spacing:0.00px">30</div>
<div class="t" style="left:31.0px;top:447.0px;font-size:13px;line-height:13px;font-weight:normal;color:#1b1b1b;letter-spacing:0.29px">Navigation 2</div>
<div class="t" style="left:16.9px;top:477.0px;font-size:13px;line-height:13px;font-weight:bold;color:#1b1b1b;letter-spacing:0.72px">Navigation:</div>
<div class="t" style="left:118.9px;top:477.0px;font-size:13px;line-height:13px;font-weight:normal;color:#1f8a1f;letter-spacing:0.47px">active</div>
<div class="t" style="left:16.9px;top:502.0px;font-size:13px;line-height:13px;font-weight:bold;color:#1b1b1b;letter-spacing:0.46px">Localization:</div>
<div class="t" style="left:118.9px;top:502.0px;font-size:13px;line-height:13px;font-weight:normal;color:#1b1b1b;letter-spacing:0.42px">inactive</div>
<div class="t" style="left:16.9px;top:527.0px;font-size:13px;line-height:13px;font-weight:bold;color:#1b1b1b;letter-spacing:0.52px">Feedback:</div>
<div class="t" style="left:118.9px;top:527.0px;font-size:13px;line-height:13px;font-weight:normal;color:#1f8a1f;letter-spacing:0.47px">active</div>
<div class="t" style="left:16.9px;top:553.4px;font-size:12.5px;line-height:12.5px;font-weight:normal;color:#1b1b1b;letter-spacing:-0.42px">ETA:</div>
<div class="t" style="left:169.2px;top:553.4px;font-size:12.5px;line-height:12.5px;font-weight:normal;color:#1b1b1b;letter-spacing:0.31px">8 s</div>
<div class="t" style="left:16.9px;top:570.4px;font-size:12.5px;line-height:12.5px;font-weight:normal;color:#1b1b1b;letter-spacing:0.53px">Distance remaining:</div>
<div class="t" style="left:169.2px;top:570.4px;font-size:12.5px;line-height:12.5px;font-weight:normal;color:#1b1b1b;letter-spacing:0.70px">1.99 m</div>
<div class="t" style="left:16.9px;top:587.4px;font-size:12.5px;line-height:12.5px;font-weight:normal;color:#1b1b1b;letter-spacing:0.50px">Time taken:</div>
<div class="t" style="left:169.2px;top:587.4px;font-size:12.5px;line-height:12.5px;font-weight:normal;color:#1b1b1b;letter-spacing:0.31px">2 s</div>
<div class="t" style="left:16.9px;top:604.4px;font-size:12.5px;line-height:12.5px;font-weight:normal;color:#1b1b1b;letter-spacing:0.25px">Recoveries:</div>
<div class="t" style="left:169.2px;top:604.4px;font-size:12.5px;line-height:12.5px;font-weight:normal;color:#1b1b1b;letter-spacing:0.00px">0</div>
<div class="t" style="left:911.6px;top:719.5px;font-size:13px;line-height:13px;font-weight:normal;color:#1b1b1b;letter-spacing:0.25px">8 fps</div>
</body></html>
